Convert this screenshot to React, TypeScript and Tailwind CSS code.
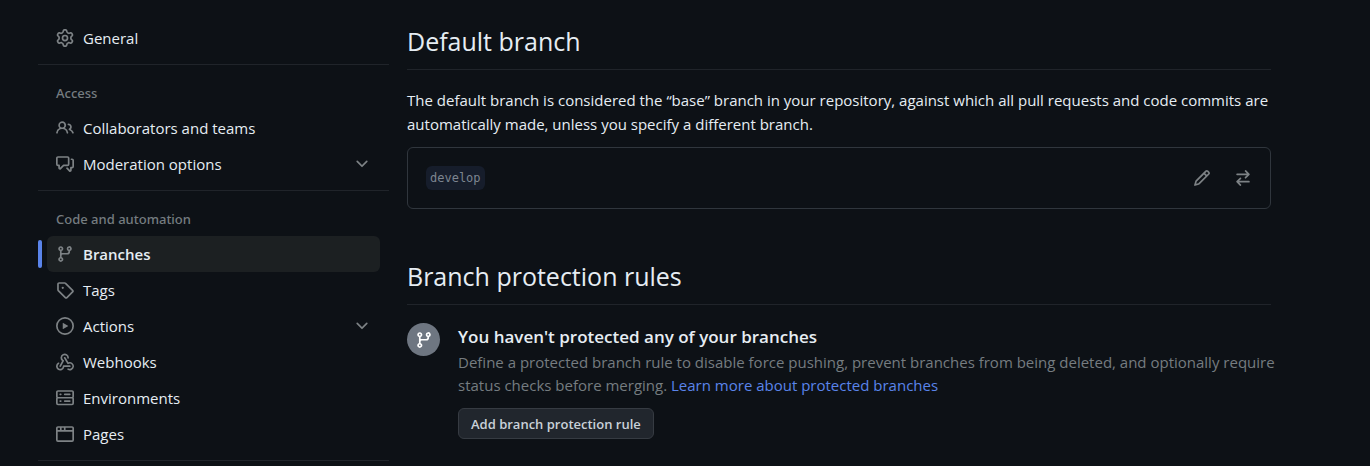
import type { ReactNode } from "react";

const paths = {
  gear: "M8 0a8.2 8.2 0 0 1 .701.031C9.444.095 9.99.645 10.16 1.29l.288 1.107c.018.066.079.158.212.224.231.114.454.243.668.386.123.082.233.09.299.071l1.103-.303c.644-.176 1.392.021 1.82.63.27.385.506.792.704 1.218.315.675.111 1.422-.364 1.891l-.814.806c-.049.048-.098.147-.088.294.016.257.016.515 0 .772-.01.147.038.246.088.294l.814.806c.475.469.679 1.216.364 1.891a7.977 7.977 0 0 1-.704 1.217c-.428.61-1.176.807-1.82.63l-1.102-.302c-.067-.019-.177-.011-.3.071a5.909 5.909 0 0 1-.668.386c-.133.066-.194.158-.211.224l-.29 1.106c-.168.646-.715 1.196-1.458 1.26a8.006 8.006 0 0 1-1.402 0c-.743-.064-1.289-.614-1.458-1.26l-.289-1.106c-.018-.066-.079-.158-.212-.224a5.738 5.738 0 0 1-.668-.386c-.123-.082-.233-.09-.299-.071l-1.103.303c-.644.176-1.392-.021-1.82-.63a8.12 8.12 0 0 1-.704-1.218c-.315-.675-.111-1.422.363-1.891l.815-.806c.05-.048.098-.147.088-.294a6.214 6.214 0 0 1 0-.772c.01-.147-.038-.246-.088-.294l-.815-.806C.635 6.045.431 5.298.746 4.623a7.92 7.92 0 0 1 .704-1.217c.428-.61 1.176-.807 1.82-.63l1.102.302c.067.019.177.011.3-.071.214-.143.437-.272.668-.386.133-.066.194-.158.211-.224l.29-1.106C6.009.645 6.556.095 7.299.03 7.53.01 7.764 0 8 0Zm-.571 1.525c-.036.003-.108.036-.137.146l-.289 1.105c-.147.561-.549.967-.998 1.189-.173.086-.34.183-.5.29-.417.278-.97.423-1.529.27l-1.103-.303c-.109-.03-.175.016-.195.045-.22.312-.412.644-.573.99-.014.031-.021.11.059.19l.815.806c.411.406.562.957.53 1.456a4.709 4.709 0 0 0 0 .582c.032.499-.119 1.05-.53 1.456l-.815.806c-.081.08-.073.159-.059.19.162.346.353.677.573.989.02.03.085.076.195.046l1.102-.303c.56-.153 1.113-.008 1.53.27.161.107.328.204.501.29.447.222.85.629.997 1.189l.289 1.105c.029.109.101.143.137.146a6.6 6.6 0 0 0 1.142 0c.036-.003.108-.036.137-.146l.289-1.105c.147-.561.549-.967.998-1.189.173-.086.34-.183.5-.29.417-.278.97-.423 1.529-.27l1.103.303c.109.029.175-.016.195-.045.22-.313.411-.644.573-.99.014-.031.021-.11-.059-.19l-.815-.806c-.411-.406-.562-.957-.53-1.456a4.709 4.709 0 0 0 0-.582c-.032-.499.119-1.05.53-1.456l.815-.806c.081-.08.073-.159.059-.19a6.464 6.464 0 0 0-.573-.989c-.02-.03-.085-.076-.195-.046l-1.102.303c-.56.153-1.113.008-1.53-.27a4.44 4.44 0 0 0-.501-.29c-.447-.222-.85-.629-.997-1.189l-.289-1.105c-.029-.11-.101-.143-.137-.146a6.6 6.6 0 0 0-1.142 0ZM11 8a3 3 0 1 1-6 0 3 3 0 0 1 6 0ZM9.5 8a1.5 1.5 0 1 0-3.001.001A1.5 1.5 0 0 0 9.5 8Z",
  people: "M2 5.5a3.5 3.5 0 1 1 5.898 2.549 5.508 5.508 0 0 1 3.034 4.084.75.75 0 1 1-1.482.235 4 4 0 0 0-7.9 0 .75.75 0 0 1-1.482-.236A5.507 5.507 0 0 1 3.102 8.05 3.493 3.493 0 0 1 2 5.5ZM11 4a3.001 3.001 0 0 1 2.22 5.018 5.01 5.01 0 0 1 2.56 3.012.749.749 0 0 1-.885.954.752.752 0 0 1-.549-.514 3.507 3.507 0 0 0-2.522-2.372.75.75 0 0 1-.574-.73v-.352a.75.75 0 0 1 .416-.672A1.5 1.5 0 0 0 11 5.5.75.75 0 0 1 11 4Zm-5.5-.5a2 2 0 1 0-.001 3.999A2 2 0 0 0 5.5 3.5Z",
  discussion: "M1.75 1h8.5c.966 0 1.75.784 1.75 1.75v5.5A1.75 1.75 0 0 1 10.25 10H7.061l-2.574 2.573A1.458 1.458 0 0 1 2 11.543V10h-.25A1.75 1.75 0 0 1 0 8.25v-5.5C0 1.784.784 1 1.75 1ZM1.5 2.75v5.5c0 .138.112.25.25.25h1a.75.75 0 0 1 .75.75v2.19l2.72-2.72a.749.749 0 0 1 .53-.22h3.5a.25.25 0 0 0 .25-.25v-5.5a.25.25 0 0 0-.25-.25h-8.5a.25.25 0 0 0-.25.25Zm13 2a.25.25 0 0 0-.25-.25h-.5a.75.75 0 0 1 0-1.5h.5c.966 0 1.75.784 1.75 1.75v5.5A1.75 1.75 0 0 1 14.25 12H14v1.543a1.458 1.458 0 0 1-2.487 1.03L9.22 12.28a.749.749 0 0 1 .326-1.275.749.749 0 0 1 .734.215l2.22 2.22v-2.19a.75.75 0 0 1 .75-.75h1a.25.25 0 0 0 .25-.25Z",
  branch: "M9.5 3.25a2.25 2.25 0 1 1 3 2.122V6A2.5 2.5 0 0 1 10 8.5H6a1 1 0 0 0-1 1v1.128a2.251 2.251 0 1 1-1.5 0V5.372a2.25 2.25 0 1 1 1.5 0v1.836A2.493 2.493 0 0 1 6 7h4a1 1 0 0 0 1-1v-.628A2.25 2.25 0 0 1 9.5 3.25Zm-6 0a.75.75 0 1 0 1.5 0 .75.75 0 0 0-1.5 0Zm8.25-.75a.75.75 0 1 0 0 1.5.75.75 0 0 0 0-1.5ZM4.25 12a.75.75 0 1 0 0 1.5.75.75 0 0 0 0-1.5Z",
  tag: "M1 7.775V2.75C1 1.784 1.784 1 2.75 1h5.025c.464 0 .91.184 1.238.513l6.25 6.25a1.75 1.75 0 0 1 0 2.474l-5.026 5.026a1.75 1.75 0 0 1-2.474 0l-6.25-6.25A1.752 1.752 0 0 1 1 7.775Zm1.5 0c0 .066.026.13.073.177l6.25 6.25a.25.25 0 0 0 .354 0l5.025-5.025a.25.25 0 0 0 0-.354l-6.25-6.25a.25.25 0 0 0-.177-.073H2.75a.25.25 0 0 0-.25.25ZM6 5a1 1 0 1 1 0 2 1 1 0 0 1 0-2Z",
  play: "M8 0a8 8 0 1 1 0 16A8 8 0 0 1 8 0ZM1.5 8a6.5 6.5 0 1 0 13 0 6.5 6.5 0 0 0-13 0Zm4.879-2.773 4.264 2.559a.25.25 0 0 1 0 .428l-4.264 2.559A.25.25 0 0 1 6 10.559V5.442a.25.25 0 0 1 .379-.215Z",
  webhook: "M5.5 4.25a2.25 2.25 0 0 1 4.5 0 .75.75 0 0 0 1.5 0 3.75 3.75 0 1 0-6.14 2.889l-2.272 4.258a.75.75 0 0 0 1.324.706L7 7.25a.75.75 0 0 0-.309-1.015A2.25 2.25 0 0 1 5.5 4.25Z M7.364 3.607a.75.75 0 0 1 1.03.257l2.608 4.349a3.75 3.75 0 1 1-.628 6.785.75.75 0 0 1 .752-1.299 2.25 2.25 0 1 0-.033-3.88.75.75 0 0 1-1.03-.256L7.107 4.636a.75.75 0 0 1 .257-1.03Z M2.9 8.776A.75.75 0 0 1 2.625 9.8 2.25 2.25 0 1 0 6 11.75a.75.75 0 0 1 .75-.751h5.5a.75.75 0 0 1 0 1.5H7.425a3.751 3.751 0 1 1-5.55-3.998.75.75 0 0 1 1.024.274Z",
  server: "M1.75 1h12.5c.966 0 1.75.784 1.75 1.75v4c0 .372-.116.717-.314 1 .198.283.314.628.314 1v4a1.75 1.75 0 0 1-1.75 1.75H1.75A1.75 1.75 0 0 1 0 12.75v-4c0-.358.109-.707.314-1a1.739 1.739 0 0 1-.314-1v-4C0 1.784.784 1 1.75 1ZM1.5 2.75v4c0 .138.112.25.25.25h12.5a.25.25 0 0 0 .25-.25v-4a.25.25 0 0 0-.25-.25H1.75a.25.25 0 0 0-.25.25Zm.25 5.75a.25.25 0 0 0-.25.25v4c0 .138.112.25.25.25h12.5a.25.25 0 0 0 .25-.25v-4a.25.25 0 0 0-.25-.25ZM7 4.75A.75.75 0 0 1 7.75 4h4.5a.75.75 0 0 1 0 1.5h-4.5A.75.75 0 0 1 7 4.75ZM7.75 10h4.5a.75.75 0 0 1 0 1.5h-4.5a.75.75 0 0 1 0-1.5ZM3 4.75A.75.75 0 0 1 3.75 4h.5a.75.75 0 0 1 0 1.5h-.5A.75.75 0 0 1 3 4.75ZM3.75 10h.5a.75.75 0 0 1 0 1.5h-.5a.75.75 0 0 1 0-1.5Z",
  browser: "M0 2.75C0 1.784.784 1 1.75 1h12.5c.966 0 1.75.784 1.75 1.75v10.5A1.75 1.75 0 0 1 14.25 15H1.75A1.75 1.75 0 0 1 0 13.25ZM14.5 6h-13v7.25c0 .138.112.25.25.25h12.5a.25.25 0 0 0 .25-.25Zm-6-3.5v2h6V2.75a.25.25 0 0 0-.25-.25ZM5 2.5v2h2v-2Zm-3.25 0a.25.25 0 0 0-.25.25V4.5h2v-2Z",
  pencil: "M11.013 1.427a1.75 1.75 0 0 1 2.474 0l1.086 1.086a1.75 1.75 0 0 1 0 2.474l-8.61 8.61c-.21.21-.47.364-.756.445l-3.251.93a.75.75 0 0 1-.927-.928l.929-3.25c.081-.286.235-.547.445-.758l8.61-8.61Zm.176 4.823L9.75 4.81l-6.286 6.287a.253.253 0 0 0-.064.108l-.558 1.953 1.953-.558a.253.253 0 0 0 .108-.064Zm1.238-3.763a.25.25 0 0 0-.354 0L10.811 3.75l1.439 1.44 1.263-1.263a.25.25 0 0 0 0-.354Z",
  swap: "M5.22 14.78a.75.75 0 0 0 1.06-1.06L4.56 12h8.69a.75.75 0 0 0 0-1.5H4.56l1.72-1.72a.75.75 0 0 0-1.06-1.06l-3 3a.75.75 0 0 0 0 1.06l3 3Zm5.56-6.5a.75.75 0 1 1-1.06-1.06l1.72-1.72H2.75a.75.75 0 0 1 0-1.5h8.69L9.72 2.28a.75.75 0 0 1 1.06-1.06l3 3a.75.75 0 0 1 0 1.06l-3 3Z",
  chevron: "M12.78 5.22a.749.749 0 0 1 0 1.06l-4.25 4.25a.749.749 0 0 1-1.06 0L3.22 6.28a.749.749 0 1 1 1.06-1.06L8 8.939l3.72-3.719a.749.749 0 0 1 1.06 0Z",
};

type IconName = keyof typeof paths;

function Icon({ name, className = "" }: { name: IconName; className?: string }) {
  return (
    <svg viewBox="0 0 16 16" fill="currentColor" aria-hidden="true" className={`size-[18px] shrink-0 ${className}`}>
      <path d={paths[name]} />
    </svg>
  );
}

type Item = { label: string; icon: IconName; active?: boolean; expandable?: boolean };

const groups: { title?: string; items: Item[] }[] = [
  { items: [{ label: "General", icon: "gear" }] },
  {
    title: "Access",
    items: [
      { label: "Collaborators and teams", icon: "people" },
      { label: "Moderation options", icon: "discussion", expandable: true },
    ],
  },
  {
    title: "Code and automation",
    items: [
      { label: "Branches", icon: "branch", active: true },
      { label: "Tags", icon: "tag" },
      { label: "Actions", icon: "play", expandable: true },
      { label: "Webhooks", icon: "webhook" },
      { label: "Environments", icon: "server" },
      { label: "Pages", icon: "browser" },
    ],
  },
];

function NavItem({ label, icon, active, expandable }: Item) {
  const row = "flex h-9 w-full items-center gap-[9px] rounded-md px-[9px] text-left text-[#e6edf3]";
  const content = (
    <>
      <Icon name={icon} className="text-[#7d8285]" />
      <span className="flex-1">{label}</span>
      {expandable && <Icon name="chevron" className="text-[#7d8285]" />}
    </>
  );
  if (expandable) {
    return (
      <li>
        <button type="button" aria-expanded="false" className={row}>
          {content}
        </button>
      </li>
    );
  }
  return (
    <li className="relative">
      {active && <span className="absolute top-1 -left-[9px] h-7 w-1 rounded-md bg-[#5a84ea]" />}
      <a href="#" aria-current={active ? "page" : undefined} className={active ? `${row} bg-[#1c2022] font-semibold` : row}>
        {content}
      </a>
    </li>
  );
}

function SectionHeading({ children }: { children: ReactNode }) {
  return (
    <h2 className="border-b border-[#20242a] pb-2 text-[25px] leading-10 text-[#e6edf3]">{children}</h2>
  );
}

export default function App() {
  return (
    <div className="flex min-h-screen gap-[18px] bg-[#0d1116] pr-[99px] pl-[38px] font-['Open_Sans',sans-serif] text-[15px] leading-6 text-[#e6edf3]">
      <nav aria-label="Settings" className="w-[351px] shrink-0 pt-5">
        {groups.map((group, i) => (
          <section key={i} className="mb-2 border-b border-[#20242a] px-[9px] pb-2">
            {group.title && (
              <h3 className="flex h-[37px] items-center px-[9px] pt-[2px] font-['Noto_Sans',sans-serif] text-[13px] font-medium text-[#757c80]">
                {group.title}
              </h3>
            )}
            <ul>
              {group.items.map((item) => (
                <NavItem key={item.label} {...item} />
              ))}
            </ul>
          </section>
        ))}
      </nav>

      <main className="min-w-0 flex-1 pt-[21px]">
        <SectionHeading>Default branch</SectionHeading>
        <p className="mt-[18px]">
          The default branch is considered the “base” branch in your repository, against which all pull requests and code
          commits are automatically made, unless you specify a different branch.
        </p>
        <div className="mt-[11px] flex h-[62px] items-center rounded-md border border-[#30363d] px-[18px]">
          <code className="rounded-md bg-[#161d2b] px-1 font-['DejaVu_Sans_Mono',monospace] text-[12px] leading-6 text-[#7d8590]">
            develop
          </code>
          <div className="ml-auto flex gap-[23px] text-[#7d8285]">
            <button type="button" aria-label="Rename branch">
              <Icon name="pencil" />
            </button>
            <button type="button" aria-label="Switch to another branch">
              <Icon name="swap" />
            </button>
          </div>
        </div>

        <div className="mt-[47px]">
          <SectionHeading>Branch protection rules</SectionHeading>
        </div>
        <div className="mt-[18px] flex gap-[18px]">
          <span className="flex size-[33px] shrink-0 items-center justify-center rounded-full bg-[#6e7681] text-white">
            <Icon name="branch" />
          </span>
          <div className="-mr-3 min-w-0 flex-1">
            <h3 className="text-[17px] leading-7 font-semibold">You haven't protected any of your branches</h3>
            <p className="leading-[23px] text-[#757c80]">
              Define a protected branch rule to disable force pushing, prevent branches from being deleted, and optionally
              require status checks before merging.{" "}
              <a href="#" className="text-[#5a84ea]">
                Learn more about protected branches
              </a>
            </p>
            <button
              type="button"
              className="mt-[11px] h-[31px] rounded-md border border-[#363b42] bg-[#21262d] px-3 text-[13px] leading-5 font-semibold text-[#c9d1d9]"
            >
              Add branch protection rule
            </button>
          </div>
        </div>
      </main>
    </div>
  );
}
